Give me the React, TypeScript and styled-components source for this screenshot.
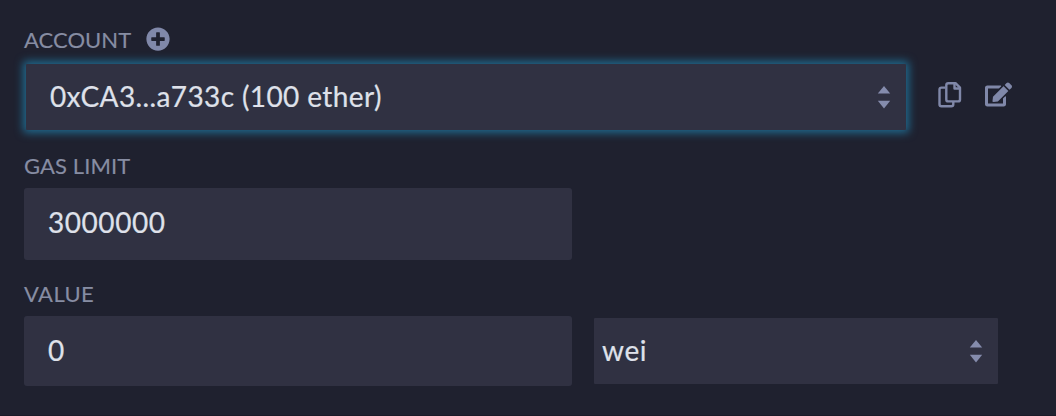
import React from "react";
import styled, { createGlobalStyle } from "styled-components";
import { FaPlusCircle, FaEdit } from "react-icons/fa";

const GlobalStyle = createGlobalStyle`
  * { box-sizing: border-box; }
  body {
    margin: 0;
    background: #1f212f;
    font-family: Lato, "Open Sans", sans-serif;
  }
`;

const Panel = styled.main`
  width: 1056px;
  height: 416px;
  padding: 26px 24px 0;
  border-bottom: 1px solid #1b1a28;
  color: #dfe1ea;
`;

const Label = styled.div<{ $spacing?: number }>`
  display: flex;
  align-items: center;
  height: 28px;
  color: #878da3;
  font-size: 22px;
  line-height: 28px;
  letter-spacing: ${(p) => p.$spacing ?? 0}px;
  -webkit-text-stroke: 0.15px currentColor;
  white-space: nowrap;
`;

const AddButton = styled.span`
  display: flex;
  margin: -2px 0 0 15px;
  color: #8088a9;
`;

const AccountRow = styled.div`
  display: flex;
  align-items: center;
  margin: 10px 0 22px 2px;
`;

const Field = styled.div<{ $width: number; $height: number; $pad?: number; $radius?: number; $focused?: boolean }>`
  display: flex;
  align-items: center;
  justify-content: space-between;
  width: ${(p) => p.$width}px;
  height: ${(p) => p.$height}px;
  padding: 0 15px 0 ${(p) => p.$pad ?? 24}px;
  border-radius: ${(p) => p.$radius ?? 3}px;
  background: #303142;
  box-shadow: ${(p) => (p.$focused ? "0 0 9px 2.5px #20698d" : "none")};
`;

const Value = styled.span<{ $spacing?: number; $lift?: number }>`
  padding-bottom: ${(p) => p.$lift ?? 3}px;
  font-size: 28px;
  line-height: 36px;
  letter-spacing: ${(p) => p.$spacing ?? 0}px;
  -webkit-text-stroke: 0.2px currentColor;
  white-space: nowrap;
`;

const Actions = styled.div`
  display: flex;
  align-items: center;
  gap: 23px;
  margin: -6px 0 0 31px;
  color: #8088a9;
`;

const GasField = styled.div`
  margin: 8px 0 20px;
`;

const ValueRow = styled.div`
  display: flex;
  align-items: center;
  gap: 22px;
  margin-top: 8px;
`;

const Arrows = () => (
  <svg width="14" height="24" viewBox="0 0 14 24" fill="#858cad">
    <path d="M7 1 L13.2 8.6 H0.8 Z" />
    <path d="M7 23.5 L0.8 15.7 H13.2 Z" />
  </svg>
);

const CopyIcon = () => (
  <svg width="25" height="28" viewBox="0 0 25 28" fill="none" stroke="currentColor" strokeWidth="2.4" strokeLinejoin="round">
    <path d="M8.5 7.6 H4.5 Q2.5 7.6 2.5 9.6 V24.2 Q2.5 26.2 4.5 26.2 H14.3 Q16.3 26.2 16.3 24.2 V21.6" />
    <path d="M11.3 3.2 H18.5 L23 7.7 V19.4 Q23 21.4 21 21.4 H11.3 Q9.3 21.4 9.3 19.4 V5.2 Q9.3 3.2 11.3 3.2 Z" />
    <path d="M17.5 3.5 V8.5 H22.8" />
  </svg>
);

export default function App() {
  return (
    <>
      <GlobalStyle />
      <Panel>
        <Label $spacing={0.05}>
          ACCOUNT
          <AddButton>
            <FaPlusCircle size={24} />
          </AddButton>
        </Label>
        <AccountRow>
          <Field $width={880} $height={66} $radius={1} $focused>
            <Value $spacing={0.38} $lift={2}>0xCA3...a733c (100 ether)</Value>
            <Arrows />
          </Field>
          <Actions>
            <CopyIcon />
            <FaEdit size={27} />
          </Actions>
        </AccountRow>
        <Label $spacing={0.1}>GAS LIMIT</Label>
        <GasField>
          <Field $width={548} $height={72}>
            <Value $spacing={0.55} $lift={4}>3000000</Value>
          </Field>
        </GasField>
        <Label $spacing={0.4}>VALUE</Label>
        <ValueRow>
          <Field $width={548} $height={70}>
            <Value>0</Value>
          </Field>
          <Field $width={404} $height={66} $pad={8} $radius={1}>
            <Value $spacing={0.6}>wei</Value>
            <Arrows />
          </Field>
        </ValueRow>
      </Panel>
    </>
  );
}
